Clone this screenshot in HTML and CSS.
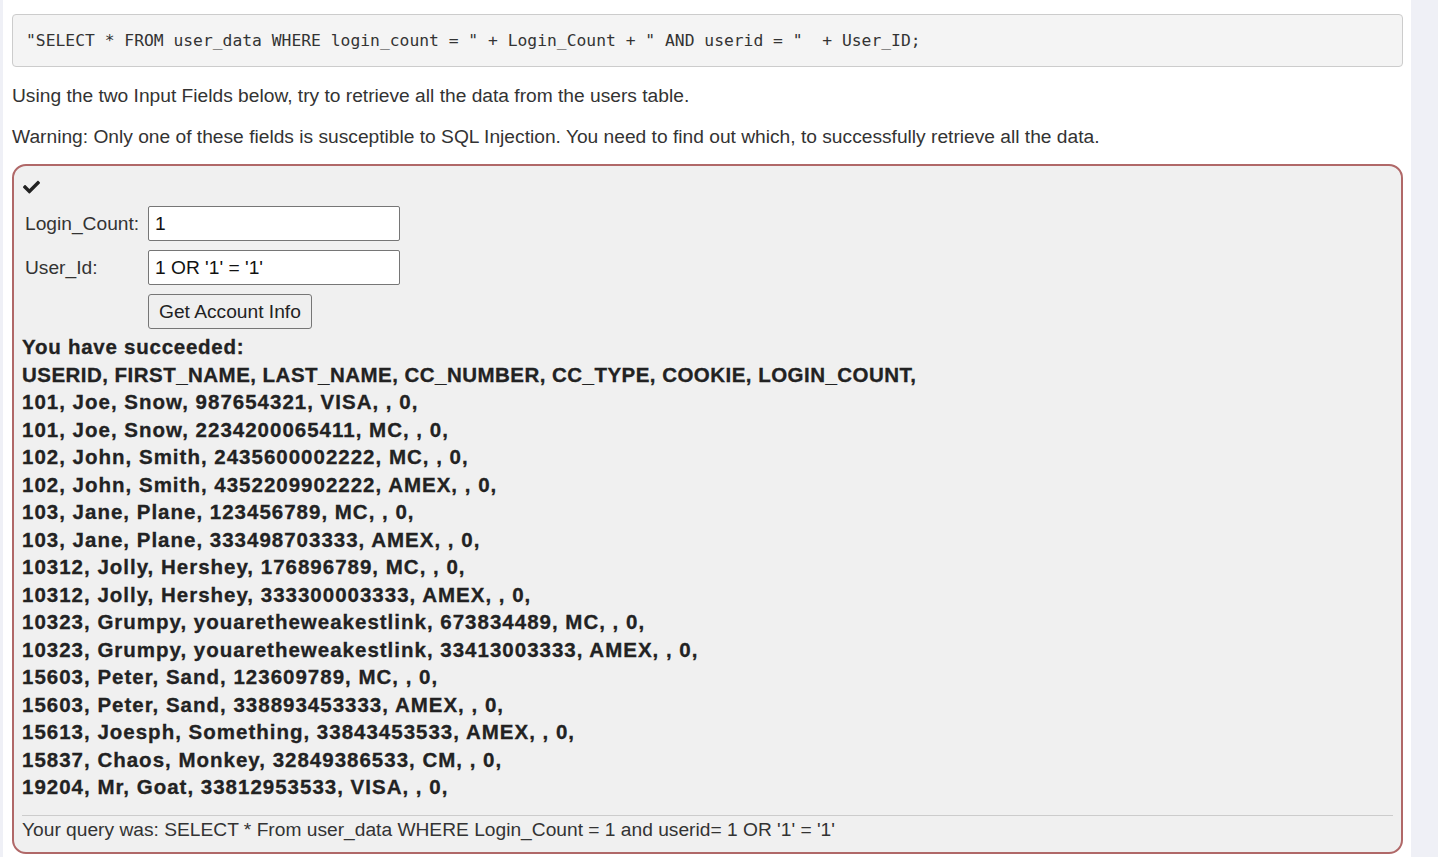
FILE: index.html
```html
<!DOCTYPE html>
<html>
<head>
<meta charset="utf-8">
<link rel="stylesheet" href="styles.css">
</head>
<body>
<div class="page">
  <main class="main">
    <pre class="code">"SELECT * FROM user_data WHERE login_count = " + Login_Count + " AND userid = "  + User_ID;</pre>
    <p class="para">Using the two Input Fields below, try to retrieve all the data from the users table.</p>
    <p class="para">Warning: Only one of these fields is susceptible to SQL Injection. You need to find out which, to successfully retrieve all the data.</p>
    <section class="attack">
      <div class="status">
        <svg class="check" viewBox="0 0 512 420" aria-hidden="true"><path d="M173.898 399.404l-166.4-166.4c-9.997-9.997-9.997-26.206 0-36.204l36.203-36.204c9.997-9.998 26.207-9.998 36.204 0L192 272.69 432.095 32.596c9.997-9.997 26.207-9.997 36.204 0l36.203 36.204c9.997 9.997 9.997 26.206 0 36.204l-294.4 294.401c-9.998 9.997-26.207 9.997-36.204-.001z" fill="#222"/></svg>
      </div>
      <form class="form">
        <label class="label">Login_Count:</label>
        <input class="input" type="text" value="1">
        <label class="label">User_Id:</label>
        <input class="input" type="text" value="1 OR '1' = '1'">
        <span></span>
        <div><button class="btn" type="button">Get Account Info</button></div>
      </form>
      <div class="output">
        <div class="title">You have succeeded:</div>
        <div class="cols">USERID, FIRST_NAME, LAST_NAME, CC_NUMBER, CC_TYPE, COOKIE, LOGIN_COUNT, </div>
        <div>101, Joe, Snow, 987654321, VISA, , 0, </div>
        <div>101, Joe, Snow, 2234200065411, MC, , 0, </div>
        <div>102, John, Smith, 2435600002222, MC, , 0, </div>
        <div>102, John, Smith, 4352209902222, AMEX, , 0, </div>
        <div>103, Jane, Plane, 123456789, MC, , 0, </div>
        <div>103, Jane, Plane, 333498703333, AMEX, , 0, </div>
        <div>10312, Jolly, Hershey, 176896789, MC, , 0, </div>
        <div>10312, Jolly, Hershey, 333300003333, AMEX, , 0, </div>
        <div>10323, Grumpy, youaretheweakestlink, 673834489, MC, , 0, </div>
        <div>10323, Grumpy, youaretheweakestlink, 33413003333, AMEX, , 0, </div>
        <div>15603, Peter, Sand, 123609789, MC, , 0, </div>
        <div>15603, Peter, Sand, 338893453333, AMEX, , 0, </div>
        <div>15613, Joesph, Something, 33843453533, AMEX, , 0, </div>
        <div>15837, Chaos, Monkey, 32849386533, CM, , 0, </div>
        <div>19204, Mr, Goat, 33812953533, VISA, , 0, </div>
      </div>
      <hr class="rule">
      <div class="query">Your query was: SELECT * From user_data WHERE Login_Count = 1 and userid= 1 OR '1' = '1'</div>
    </section>
  </main>
</div>
</body>
</html>
```
FILE: styles.css
```css
html, body {
  margin: 0;
  padding: 0;
  height: 100%;
}
body {
  background: #eff0f6;
  font-family: "Liberation Sans", Arial, sans-serif;
  color: #333;
  overflow: hidden;
}
.page {
  display: flex;
  height: 100%;
}
.main {
  margin-left: 3px;
  width: 1408px;
  background: #fff;
  padding: 14px 8px 0 9px;
  box-sizing: border-box;
}
.code {
  margin: 0 0 15px;
  padding: 14px 13px;
  background: #f4f4f4;
  border: 1px solid #cccccc;
  border-radius: 4px;
  font-family: "DejaVu Sans Mono", "Liberation Mono", monospace;
  font-size: 16.33px;
  line-height: 23px;
  color: #333;
  white-space: pre;
}
.para {
  margin: 0 0 14px;
  font-size: 19.2px;
  line-height: 27px;
}
.attack {
  border: 2px solid #b06868;
  border-radius: 14px;
  background: #f0f0f0;
  padding: 9px 8px 10px 8px;
  margin-top: 1px;
}
.status {
  height: 24px;
  display: flex;
  align-items: center;
  padding-left: 1px;
}
.check {
  width: 17px;
  height: 14px;
  display: block;
}
.form {
  margin-top: 7px;
  display: grid;
  grid-template-columns: 126px 252px;
  row-gap: 9px;
  align-items: center;
}
.label {
  padding-left: 3px;
  font-size: 19.2px;
}
.input {
  height: 35px;
  box-sizing: border-box;
  border: 1px solid #767676;
  border-radius: 2px;
  background: #fff;
  font-family: "Liberation Sans", Arial, sans-serif;
  font-size: 19.2px;
  color: #111;
  padding: 0 6px;
  margin: 0;
}
.btn {
  height: 35px;
  box-sizing: border-box;
  border: 1px solid #767676;
  border-radius: 3px;
  background: #efefef;
  font-family: "Liberation Sans", Arial, sans-serif;
  font-size: 19.2px;
  color: #222;
  padding: 0 10px;
  margin: 0;
}
.output {
  margin-top: 4px;
  font-weight: bold;
  font-size: 20.5px;
  line-height: 27.5px;
  letter-spacing: 1px;
  color: #222;
  -webkit-text-stroke: 0.3px #222;
}
.output .title {
  letter-spacing: 0.75px;
}
.output .cols {
  letter-spacing: 0.47px;
}
.rule {
  border: 0;
  border-top: 1px solid #cccccc;
  margin: 14px 0 1px;
}
.query {
  font-size: 19.2px;
  line-height: 25px;
}
```
